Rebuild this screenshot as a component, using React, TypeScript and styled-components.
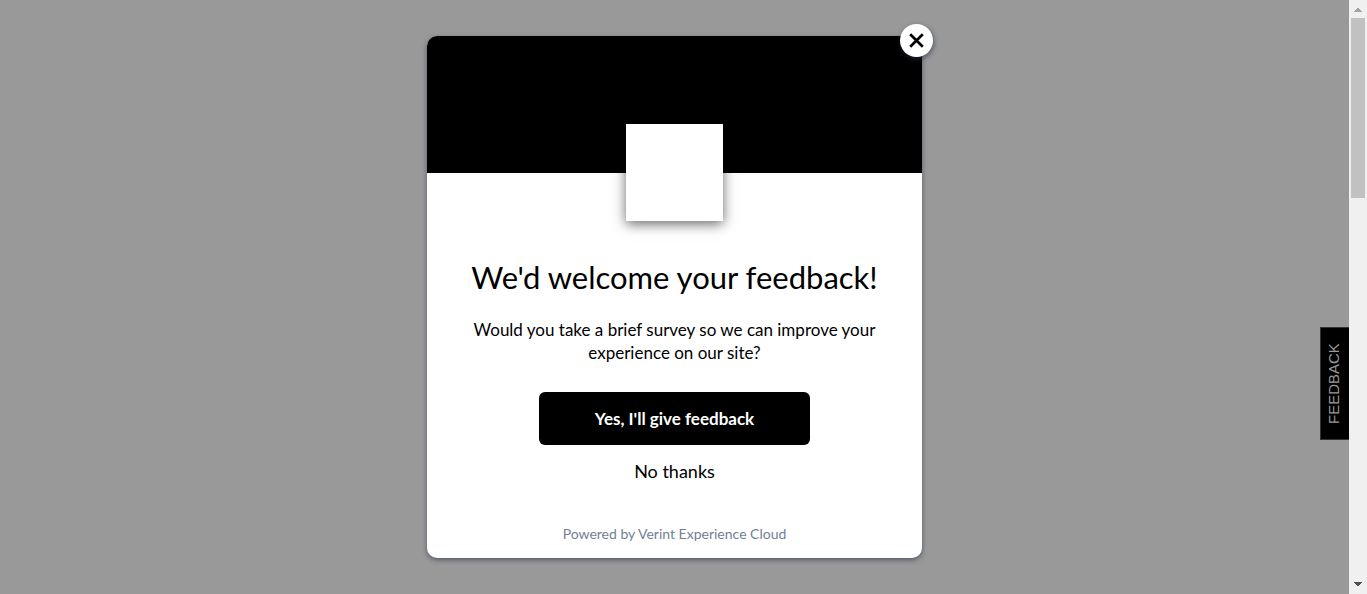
import React from "react";
import styled, { createGlobalStyle } from "styled-components";

const GlobalStyle = createGlobalStyle`
  *, *::before, *::after { box-sizing: border-box; }
  body {
    margin: 0;
    background: #999999;
    color: #000000;
    font-family: Lato, "Liberation Sans", sans-serif;
  }
`;

const Page = styled.div`
  display: flex;
  min-height: 100vh;
`;

const Backdrop = styled.main`
  flex: 1;
  display: flex;
  align-items: center;
  justify-content: center;
  padding: 36px 30px;
`;

const Dialog = styled.section`
  position: relative;
  width: 100%;
  max-width: 495px;
  border-radius: 10px;
  background: #ffffff;
  box-shadow: 0 2px 5px rgba(45, 55, 75, 0.65);
  text-align: center;
`;

const Banner = styled.header`
  display: flex;
  justify-content: center;
  height: 137px;
  padding-top: 88px;
  border-radius: 10px 10px 0 0;
  background: #000000;
`;

const LogoTile = styled.div`
  flex: none;
  width: 97px;
  height: 97px;
  background: #ffffff;
  box-shadow: 0 3px 12px rgba(0, 0, 0, 0.6);
`;

const CloseButton = styled.button`
  position: absolute;
  top: -12px;
  right: -11px;
  display: flex;
  align-items: center;
  justify-content: center;
  width: 33px;
  height: 33px;
  padding: 0;
  border: 0;
  border-radius: 50%;
  background: #ffffff;
  box-shadow: 1px 2px 5px rgba(45, 55, 75, 0.65);
  cursor: pointer;
`;

const Content = styled.div`
  display: flex;
  flex-direction: column;
  align-items: center;
  padding: 84px 36px 14px;
`;

const Title = styled.h1`
  margin: 0;
  font-size: 31px;
  font-weight: 400;
  line-height: 40px;
`;

const Message = styled.p`
  margin: 21px 0 28px;
  font-size: 17px;
  line-height: 23px;
`;

const ActionButton = styled.button<{ $primary?: boolean }>`
  width: 271px;
  height: 53px;
  padding: 0;
  border: 0;
  border-radius: 6px;
  background: ${(p) => (p.$primary ? "#000000" : "transparent")};
  color: ${(p) => (p.$primary ? "#ffffff" : "#000000")};
  font-family: inherit;
  font-size: ${(p) => (p.$primary ? "17px" : "18px")};
  font-weight: ${(p) => (p.$primary ? 700 : 400)};
  line-height: 23px;
  cursor: pointer;
`;

const Credit = styled.footer`
  margin-top: 26px;
  color: #718096;
  font-size: 14px;
  line-height: 20px;
`;

const FeedbackTab = styled.button`
  position: fixed;
  top: 327px;
  right: 18px;
  width: 29px;
  height: 113px;
  padding: 0 2px 0 0;
  border: 1px solid #333333;
  border-right: 0;
  background: #000000;
  color: #999999;
  font-family: "Liberation Sans", sans-serif;
  font-size: 15px;
  line-height: 26px;
  writing-mode: vertical-rl;
  cursor: pointer;

  span {
    display: block;
    transform: rotate(180deg);
  }
`;

const Scrollbar = styled.div`
  position: sticky;
  top: 0;
  display: flex;
  flex: none;
  flex-direction: column;
  width: 18px;
  height: 100vh;
  background: #f0f0f0;
`;

const ScrollArrow = styled.div<{ $end?: boolean }>`
  display: flex;
  align-items: center;
  justify-content: center;
  height: 18px;
  padding: ${(p) => (p.$end ? "0 0 2px" : "2px 0 0")};
`;

const ScrollTrack = styled.div`
  flex: 1;
  padding: 0 2px;
`;

const ScrollThumb = styled.div`
  height: 180px;
  background: #c1c1c1;
`;

export default function App() {
  return (
    <Page>
      <GlobalStyle />
      <Backdrop>
        <Dialog role="dialog" aria-labelledby="survey-title">
          <Banner>
            <LogoTile />
          </Banner>
          <Content>
            <Title id="survey-title">We'd welcome your feedback!</Title>
            <Message>
              Would you take a brief survey so we can improve your experience on our site?
            </Message>
            <ActionButton type="button" $primary>Yes, I'll give feedback</ActionButton>
            <ActionButton type="button">No thanks</ActionButton>
            <Credit>Powered by Verint Experience Cloud</Credit>
          </Content>
          <CloseButton type="button" aria-label="Close">
            <svg width="15" height="15" viewBox="0 0 15 15" fill="none" stroke="#000000" strokeWidth="2.7">
              <path d="M1.2 1.2 13.8 13.8M13.8 1.2 1.2 13.8" />
            </svg>
          </CloseButton>
        </Dialog>
      </Backdrop>
      <FeedbackTab type="button"><span>FEEDBACK</span></FeedbackTab>
      <Scrollbar aria-hidden="true">
        <ScrollArrow>
          <svg width="8" height="4" viewBox="0 0 8 4" fill="#a3a3a3" shapeRendering="crispEdges">
            <path d="M3 0h2v1h1v1h1v1h1v1H0V3h1V2h1V1h1z" />
          </svg>
        </ScrollArrow>
        <ScrollTrack>
          <ScrollThumb />
        </ScrollTrack>
        <ScrollArrow $end>
          <svg width="8" height="4" viewBox="0 0 8 4" fill="#505050" shapeRendering="crispEdges">
            <path d="M0 0h8v1H7v1H6v1H5v1H3V3H2V2H1V1H0z" />
          </svg>
        </ScrollArrow>
      </Scrollbar>
    </Page>
  );
}
